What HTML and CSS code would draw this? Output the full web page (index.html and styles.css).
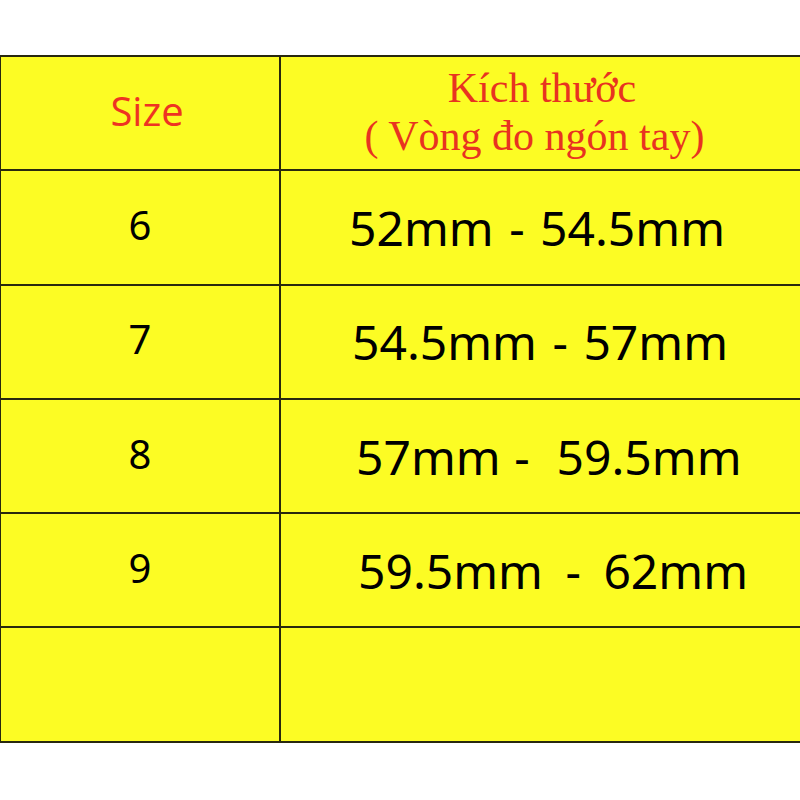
FILE: index.html
```html
<!DOCTYPE html>
<html lang="vi">
<head>
<meta charset="utf-8">
<title>Bảng size nhẫn</title>
<link rel="stylesheet" href="styles.css">
</head>
<body>
<div class="table">
  <div class="cell size-head"><span>Size</span></div>
  <div class="cell dim-head"><span><span class="dim-title">Kích thước</span><br>( Vòng đo ngón tay)</span></div>

  <div class="cell num">6</div>
  <div class="cell val r1">52mm - 54.5mm</div>

  <div class="cell num">7</div>
  <div class="cell val r2">54.5mm - 57mm</div>

  <div class="cell num">8</div>
  <div class="cell val r3">57mm -  59.5mm</div>

  <div class="cell num">9</div>
  <div class="cell val r4">59.5mm - 62mm</div>

  <div class="cell"></div>
  <div class="cell"></div>
</div>
</body>
</html>
```
FILE: styles.css
```css
html, body {
  margin: 0;
  padding: 0;
  background: #ffffff;
  width: 800px;
  height: 800px;
  overflow: hidden;
}

.table {
  margin-top: 55px;
  display: grid;
  grid-template-columns: 278px 1fr;
  grid-template-rows: repeat(6, 112.3px);
  gap: 2px;
  padding: 2px 0 2px 1px;
  background: #28280e;
}

.cell {
  background: #fcfc24;
  display: flex;
  align-items: center;
}

.size-head {
  justify-content: center;
  font-family: "Open Sans", "Noto Sans", sans-serif;
  font-size: 40px;
  color: #ee3322;
}

.size-head span {
  margin-left: 14px;
  margin-top: -6px;
}

.dim-head {
  justify-content: center;
  text-align: center;
  font-family: "Liberation Serif", serif;
  font-size: 42px;
  line-height: 48px;
  color: #e83320;
}

.dim-head > span {
  margin-left: -12px;
  margin-top: -2px;
}

.dim-title {
  padding-left: 15px;
}

.num {
  justify-content: center;
  font-family: "Noto Sans", "Open Sans", sans-serif;
  font-size: 40px;
  color: #000000;
  padding-bottom: 6px;
  box-sizing: border-box;
}

.val {
  font-family: "Noto Sans", "Open Sans", sans-serif;
  font-size: 48px;
  color: #000000;
  white-space: pre;
  word-spacing: 3px;
}

.r1 { padding-left: 68px; }
.r2 { padding-left: 71px; }
.r3 { padding-left: 75px; word-spacing: 1px; }
.r4 { padding-left: 77px; word-spacing: 10px; }
```
